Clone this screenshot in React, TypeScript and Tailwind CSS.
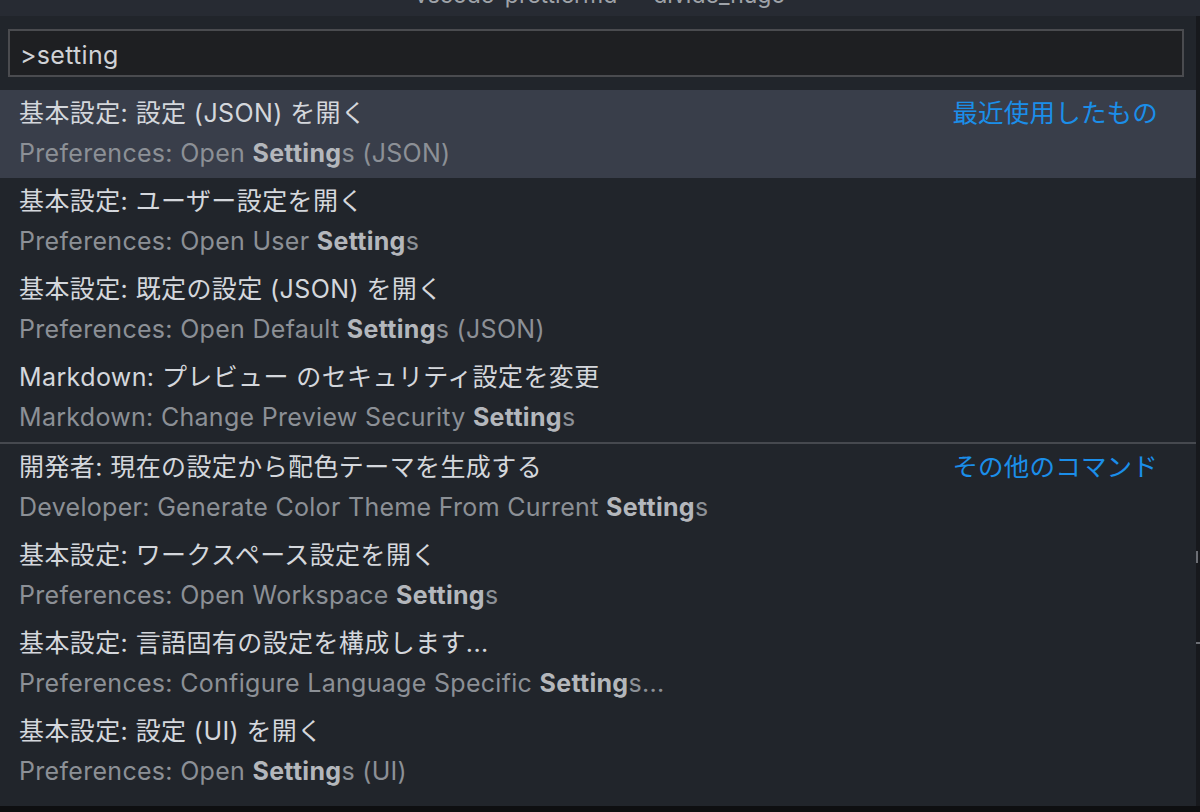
import React from "react";

type Item = { label: string; pre: string; bold: string; post: string; tag?: string };

const recent: Item[] = [
  { label: "基本設定: 設定 (JSON) を開く", pre: "Preferences: Open ", bold: "Setting", post: "s (JSON)", tag: "最近使用したもの" },
  { label: "基本設定: ユーザー設定を開く", pre: "Preferences: Open User ", bold: "Setting", post: "s" },
  { label: "基本設定: 既定の設定 (JSON) を開く", pre: "Preferences: Open Default ", bold: "Setting", post: "s (JSON)" },
  { label: "Markdown: プレビュー のセキュリティ設定を変更", pre: "Markdown: Change Preview Security ", bold: "Setting", post: "s" },
];

const others: Item[] = [
  { label: "開発者: 現在の設定から配色テーマを生成する", pre: "Developer: Generate Color Theme From Current ", bold: "Setting", post: "s", tag: "その他のコマンド" },
  { label: "基本設定: ワークスペース設定を開く", pre: "Preferences: Open Workspace ", bold: "Setting", post: "s" },
  { label: "基本設定: 言語固有の設定を構成します...", pre: "Preferences: Configure Language Specific ", bold: "Setting", post: "s..." },
  { label: "基本設定: 設定 (UI) を開く", pre: "Preferences: Open ", bold: "Setting", post: "s (UI)" },
];

function Row({ item, selected }: { item: Item; selected?: boolean }) {
  return (
    <div
      className={`h-[88px] pl-[19px] pr-[38px] pt-[3px] flex ${selected ? "bg-[#393e4a]" : ""}`}
    >
      <div className="flex-1 min-w-0">
        <div className="h-[40px] leading-[40px] text-[25px] tracking-[0.4px] text-[#d4d7dc] whitespace-nowrap">{item.label}</div>
        <div className="h-[40px] leading-[40px] text-[25px] tracking-[0.3px] text-[#8c9096] whitespace-nowrap">
          {item.pre}
          <span className="font-bold text-[#b4b7bc]">{item.bold}</span>
          {item.post}
        </div>
      </div>
      {item.tag && (
        <div className="h-[40px] leading-[40px] text-[25.5px] tracking-[0.2px] text-[#1b8ee9] whitespace-nowrap">{item.tag}</div>
      )}
    </div>
  );
}

export default function App() {
  return (
    <div
      className="w-[1200px] h-[812px] flex flex-col overflow-hidden bg-[#0e0f11]"
      style={{ fontFamily: '"Inter", "Noto Sans CJK JP", sans-serif' }}
    >
      <div className="h-[16px] bg-[#272b33] overflow-hidden flex justify-center shrink-0">
        <div className="mt-[-17px] h-[24px] leading-[24px] text-[23px] text-[#9fa3a9] whitespace-nowrap">
          vscode-prettiermd — divide_hugo
        </div>
      </div>
      <div className="flex h-[790px] shrink-0">
        <div className="w-[1196px] bg-[#21252b] flex flex-col">
          <div className="pt-[13px] px-[8px] pr-[12px]">
            <div className="h-[48px] border-2 border-[#4a4b4f] bg-[#1e1f22] flex items-center pl-[10px] pt-[5px] text-[25px] tracking-[0.3px] text-[#d0d2d6]">
              &gt;setting
            </div>
          </div>
          <div className="mt-[13px]">
            {recent.map((it, i) => (
              <Row key={i} item={it} selected={i === 0} />
            ))}
            <div className="h-[2px] bg-[#46494f]" />
            {others.map((it, i) => (
              <Row key={i} item={it} />
            ))}
          </div>
        </div>
        <div className="w-[4px] bg-[#17191d] flex flex-col">
          <div className="h-[535px]" />
          <div className="h-[12px] w-[2px] bg-[#6b6e74]" />
          <div className="h-[79px]" />
          <div className="h-[2px] w-[4px] bg-[#6b6e74]" />
        </div>
      </div>
    </div>
  );
}
